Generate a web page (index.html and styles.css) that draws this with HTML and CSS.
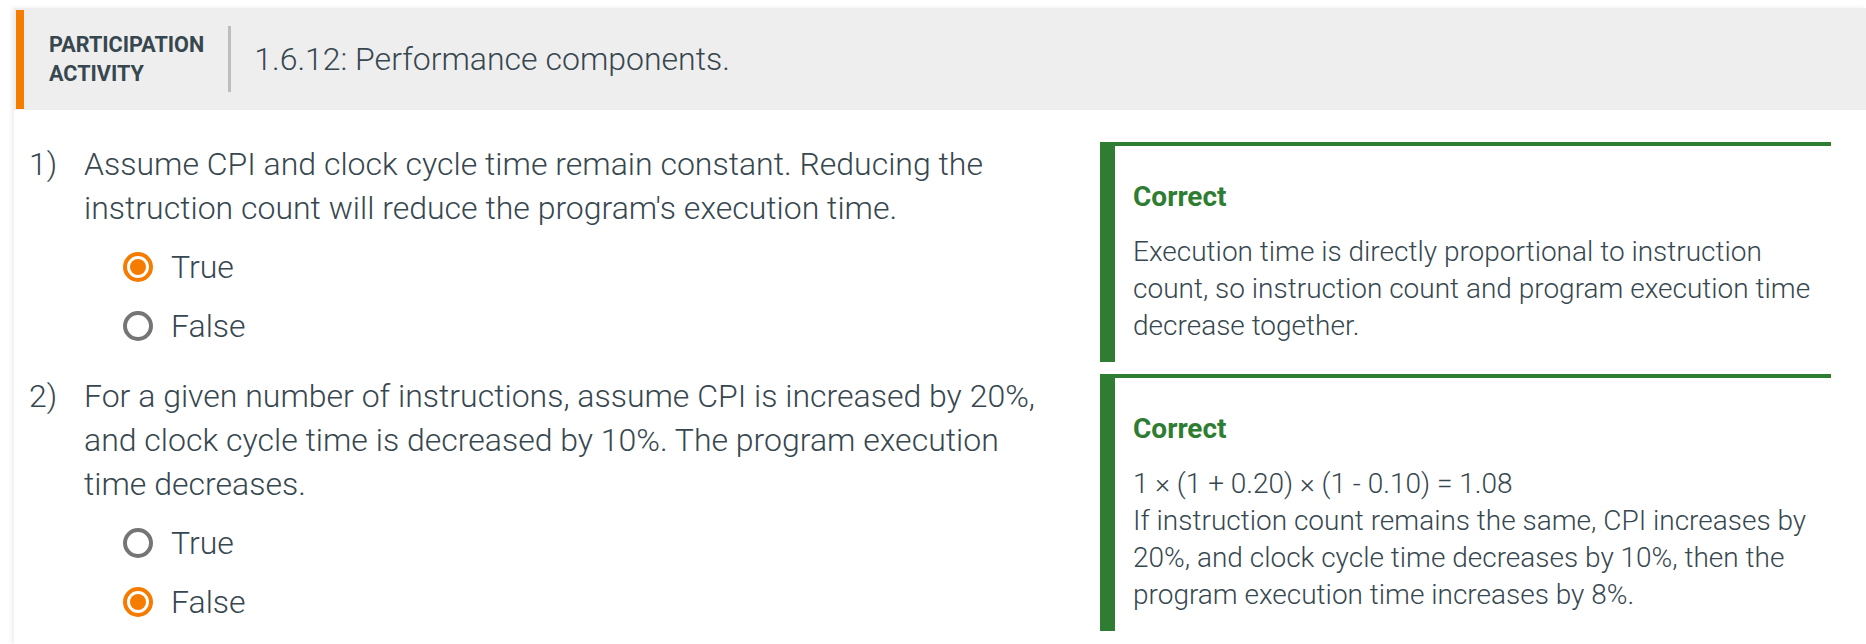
FILE: index.html
```html
<!DOCTYPE html>
<html lang="en">
<head>
<meta charset="utf-8">
<title>Participation activity</title>
<link rel="stylesheet" href="styles.css">
</head>
<body>
<div class="card">
  <div class="header">
    <div class="accent"></div>
    <div class="label">PARTICIPATION<br>ACTIVITY</div>
    <div class="divider"></div>
    <h1 class="title">1.6.12: Performance components.</h1>
  </div>
  <div class="content">
    <div class="row">
      <div class="question">
        <div class="qhead">
          <span class="num">1)</span>
          <div class="qtext">Assume CPI and clock cycle time remain constant. Reducing the instruction count will reduce the program's execution time.</div>
        </div>
        <div class="options">
          <div class="opt"><span class="radio checked"></span><span>True</span></div>
          <div class="opt"><span class="radio"></span><span>False</span></div>
        </div>
      </div>
      <div class="feedback">
        <div class="fb-title">Correct</div>
        <div class="fb-text">Execution time is directly proportional to instruction count, so instruction count and program execution time decrease together.</div>
      </div>
    </div>
    <div class="row">
      <div class="question">
        <div class="qhead">
          <span class="num">2)</span>
          <div class="qtext">For a given number of instructions, assume CPI is increased by 20%, and clock cycle time is decreased by 10%. The program execution time decreases.</div>
        </div>
        <div class="options">
          <div class="opt"><span class="radio"></span><span>True</span></div>
          <div class="opt"><span class="radio checked"></span><span>False</span></div>
        </div>
      </div>
      <div class="feedback">
        <div class="fb-title">Correct</div>
        <div class="fb-text">1 × (1 + 0.20) × (1 - 0.10) = 1.08<br>If instruction count remains the same, CPI increases by 20%, and clock cycle time decreases by 10%, then the program execution time increases by 8%.</div>
      </div>
    </div>
  </div>
</div>
</body>
</html>
```
FILE: styles.css
```css
html, body {
  margin: 0;
  padding: 0;
  background: #ffffff;
}
body {
  font-family: "Roboto", "Liberation Sans", sans-serif;
  color: #37474f;
  overflow: hidden;
}
.card {
  margin: 8px 0 0 14px;
  background: #ffffff;
  box-shadow: -2px 0 5px rgba(0, 0, 0, 0.08);
  min-height: 636px;
}
.header {
  display: flex;
  align-items: center;
  height: 102px;
  background: #eeeeee;
}
.accent {
  align-self: stretch;
  width: 8px;
  margin: 2px 0 1px 2px;
  background: #f57c00;
}
.label {
  margin-left: 25px;
  font-size: 21.6px;
  line-height: 29px;
  font-weight: 700;
  color: #37474f;
}
.divider {
  width: 3px;
  height: 66px;
  margin-left: 24px;
  background: #bdbdbd;
}
.title {
  margin: 0 0 0 23px;
  font-size: 32px;
  line-height: 44px;
  font-weight: 300;
  color: #37474f;
}
.content {
  padding: 32px 35px 0 15px;
  display: flex;
  flex-direction: column;
  gap: 12px;
}
.row {
  display: grid;
  grid-template-columns: 1fr 731px;
  column-gap: 50px;
  align-items: start;
}
.qhead {
  display: flex;
}
.num {
  flex: 0 0 55px;
  font-size: 32px;
  line-height: 44px;
  font-weight: 300;
}
.qtext {
  flex: 1;
  font-size: 32px;
  line-height: 44px;
  font-weight: 300;
}
.options {
  padding-left: 94px;
}
.opt {
  display: flex;
  align-items: center;
  height: 44px;
  margin-top: 15px;
  font-size: 32px;
  font-weight: 300;
}
.radio {
  box-sizing: border-box;
  width: 30px;
  height: 30px;
  margin-right: 18px;
  border: 4px solid #757575;
  border-radius: 50%;
  display: flex;
  align-items: center;
  justify-content: center;
}
.radio.checked {
  border-color: #f57c00;
}
.radio.checked::after {
  content: "";
  width: 16px;
  height: 16px;
  border-radius: 50%;
  background: #f57c00;
}
.feedback {
  border-top: 4px solid #2e7d32;
  border-left: 15px solid #2e7d32;
  padding: 32px 10px 18px 18px;
}
.fb-title {
  font-size: 28px;
  line-height: 37px;
  font-weight: 700;
  color: #2e7d32;
  margin-bottom: 18px;
}
.fb-text {
  font-size: 28px;
  line-height: 37px;
  font-weight: 300;
  color: #37474f;
}
```
